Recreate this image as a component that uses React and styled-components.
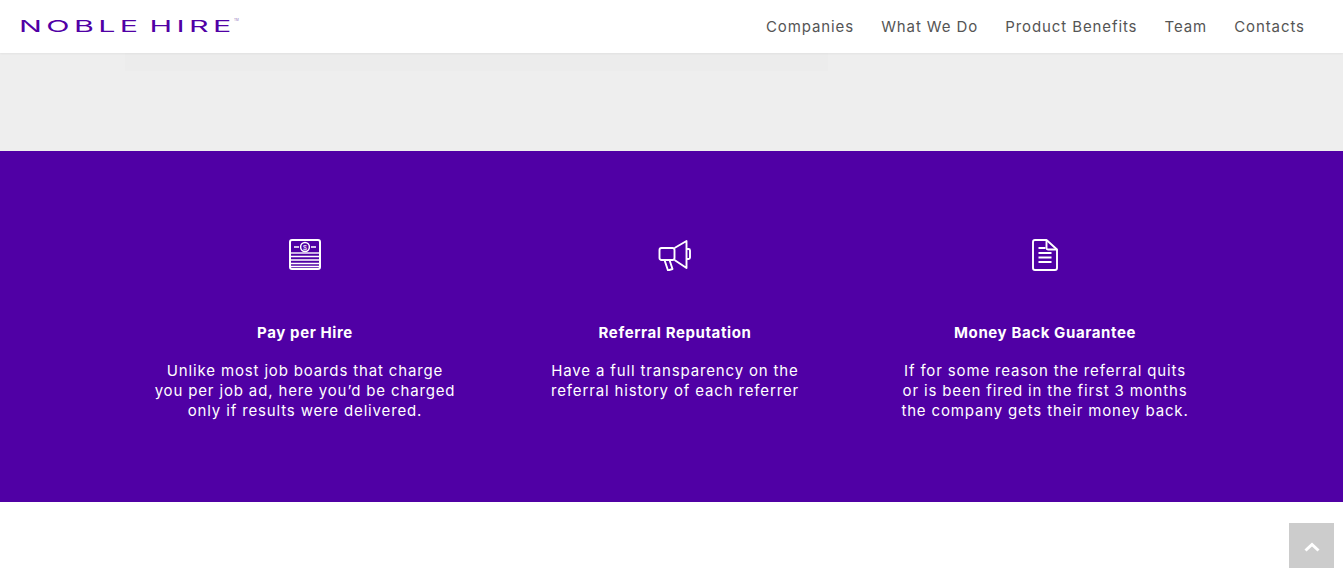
import styled, { createGlobalStyle } from "styled-components";

const GlobalStyle = createGlobalStyle`
    html, body {
        margin: 0;
        padding: 0;
        background: #fff;
        font-family: "Inter", "Open Sans", sans-serif;
    }
`;

const MoneyIcon = () => (
    <svg width="34" height="32" viewBox="0 0 34 32" fill="none" stroke="#fff">
        <rect x="2" y="1" width="30" height="29" rx="2" strokeWidth="2" />
        <path d="M2 14h30" strokeWidth="1.4" />
        <circle cx="17" cy="8" r="4.4" strokeWidth="1.5" />
        <text x="17" y="10.5" fontSize="7" fill="#fff" stroke="none" textAnchor="middle" fontFamily="Liberation Sans">$</text>
        <path d="M6 8h5M23 8h5M2 17.500h30M2 21h30M2 24.500h30M2 27.500h30" strokeWidth="1.5" />
    </svg>
);

const MegaphoneIcon = () => (
    <svg width="34" height="32" viewBox="0 0 34 32" fill="none" stroke="#fff" strokeWidth="1.9" strokeLinejoin="round">
        <rect x="1.500" y="9" width="15" height="12" rx="2" />
        <path d="M16.500 9L28.500 2v27L16.500 21" />
        <path d="M28.500 10h2a1.500 1.500 0 0 1 1.500 1.500v7a1.500 1.500 0 0 1-1.500 1.500h-2" />
        <path d="M6.500 21l3.500 10.500 4.500-1.500L11.500 21" />
    </svg>
);

const DocumentIcon = () => (
    <svg width="34" height="32" viewBox="0 0 34 32" fill="none" stroke="#fff" strokeWidth="1.9" strokeLinejoin="round">
        <path d="M18.500 1H7a2 2 0 0 0-2 2v26a2 2 0 0 0 2 2h20a2 2 0 0 0 2-2V10.500z" />
        <path d="M18.500 1v8a1.500 1.500 0 0 0 1.500 1.500h9" />
        <path d="M10.500 9h7M10.500 14h13M10.500 18.500h13M10.500 23h13" />
    </svg>
);

const links = ["Companies", "What We Do", "Product Benefits", "Team", "Contacts"];

const features = [
    {
        icon: <MoneyIcon />,
        title: "Pay per Hire",
        lines: ["Unlike most job boards that charge", "you per job ad, here you’d be charged", "only if results were delivered."],
    },
    {
        icon: <MegaphoneIcon />,
        title: "Referral Reputation",
        lines: ["Have a full transparency on the", "referral history of each referrer"],
    },
    {
        icon: <DocumentIcon />,
        title: "Money Back Guarantee",
        lines: ["If for some reason the referral quits", "or is been fired in the first 3 months", "the company gets their money back."],
    },
];

const App = () => {
    return (
        <Page>
            <GlobalStyle />
            <Header>
                <Logo>
                    <LogoText>NOBLE HIR<LastLetter>E</LastLetter></LogoText>
                    <Trademark>TM</Trademark>
                </Logo>
                <Nav>
                    {links.map((link) => (
                        <NavLink key={link} href="#">{link}</NavLink>
                    ))}
                </Nav>
            </Header>
            <GraySection>
                <GhostBar />
            </GraySection>
            <PurpleSection>
                <Features>
                    {features.map((feature) => (
                        <Feature key={feature.title}>
                            <IconBox>{feature.icon}</IconBox>
                            <FeatureTitle>{feature.title}</FeatureTitle>
                            <FeatureText>
                                {feature.lines.map((line) => (
                                    <span key={line}>{line}</span>
                                ))}
                            </FeatureText>
                        </Feature>
                    ))}
                </Features>
            </PurpleSection>
            <Footer>
                <TopButton aria-label="Back to top">
                    <svg width="16" height="10" viewBox="0 0 16 10" fill="none" stroke="#fff" strokeWidth="3">
                        <path d="M1.500 8.500L8 2.500l6.500 6" />
                    </svg>
                </TopButton>
            </Footer>
        </Page>
    );
};

const Page = styled.div`
    width: 100%;
    height: 579px;
    overflow: hidden;
    display: flex;
    flex-direction: column;
`;

const Header = styled.header`
    height: 53px;
    flex-shrink: 0;
    display: flex;
    align-items: center;
    justify-content: space-between;
    padding: 0 39px 0 19px;
    background: #fff;
    position: relative;
    box-shadow: 0 1px 2px rgba(0, 0, 0, 0.05);
`;

const Logo = styled.div`
    display: flex;
    align-items: flex-start;
    color: #5000a5;
    margin-top: -1px;
`;

const LogoText = styled.span`
    display: inline-block;
    width: 215px;
    font-size: 16px;
    line-height: 16px;
    font-weight: 400;
    letter-spacing: 2.3px;
    word-spacing: -3px;
    white-space: nowrap;
    transform: scaleX(1.9);
    transform-origin: left center;
`;

const LastLetter = styled.span`
    letter-spacing: 0;
`;

const Trademark = styled.span`
    font-size: 3px;
    line-height: 5px;
    color: #8a6bb5;
`;

const Nav = styled.nav`
    display: flex;
    gap: 28px;
`;

const NavLink = styled.a`
    font-size: 15px;
    line-height: 20px;
    color: #555;
    text-decoration: none;
    letter-spacing: 0.9px;
    margin-right: -0.9px;
`;

const GraySection = styled.section`
    height: 98px;
    flex-shrink: 0;
    background: #eee;
    padding-left: 125px;
`;

const GhostBar = styled.div`
    width: 703px;
    height: 18px;
    background: #ececec;
`;

const PurpleSection = styled.section`
    height: 351px;
    flex-shrink: 0;
    background: #5000a5;
    padding-left: 120px;
`;

const Features = styled.div`
    display: grid;
    grid-template-columns: repeat(3, 370px);
    padding-top: 88px;
`;

const Feature = styled.div`
    display: flex;
    flex-direction: column;
    align-items: center;
    color: #fff;
    text-align: center;
`;

const IconBox = styled.div`
    height: 32px;
    display: flex;
    align-items: center;
    justify-content: center;
`;

const FeatureTitle = styled.h4`
    margin: 52px 0 0;
    font-size: 15px;
    line-height: 20px;
    font-weight: 700;
    letter-spacing: 0.6px;
`;

const FeatureText = styled.p`
    margin: 18px 0 0;
    font-size: 15px;
    line-height: 20px;
    letter-spacing: 0.85px;
    display: flex;
    flex-direction: column;
    white-space: nowrap;
`;

const Footer = styled.div`
    flex: 1;
    background: #fff;
    display: flex;
    justify-content: flex-end;
    align-items: flex-end;
    padding: 0 9px 11px 0;
`;

const TopButton = styled.button`
    width: 45px;
    height: 45px;
    padding: 3px 0 0;
    border: none;
    background: #ccc;
    display: flex;
    align-items: center;
    justify-content: center;
`;

export default App;
